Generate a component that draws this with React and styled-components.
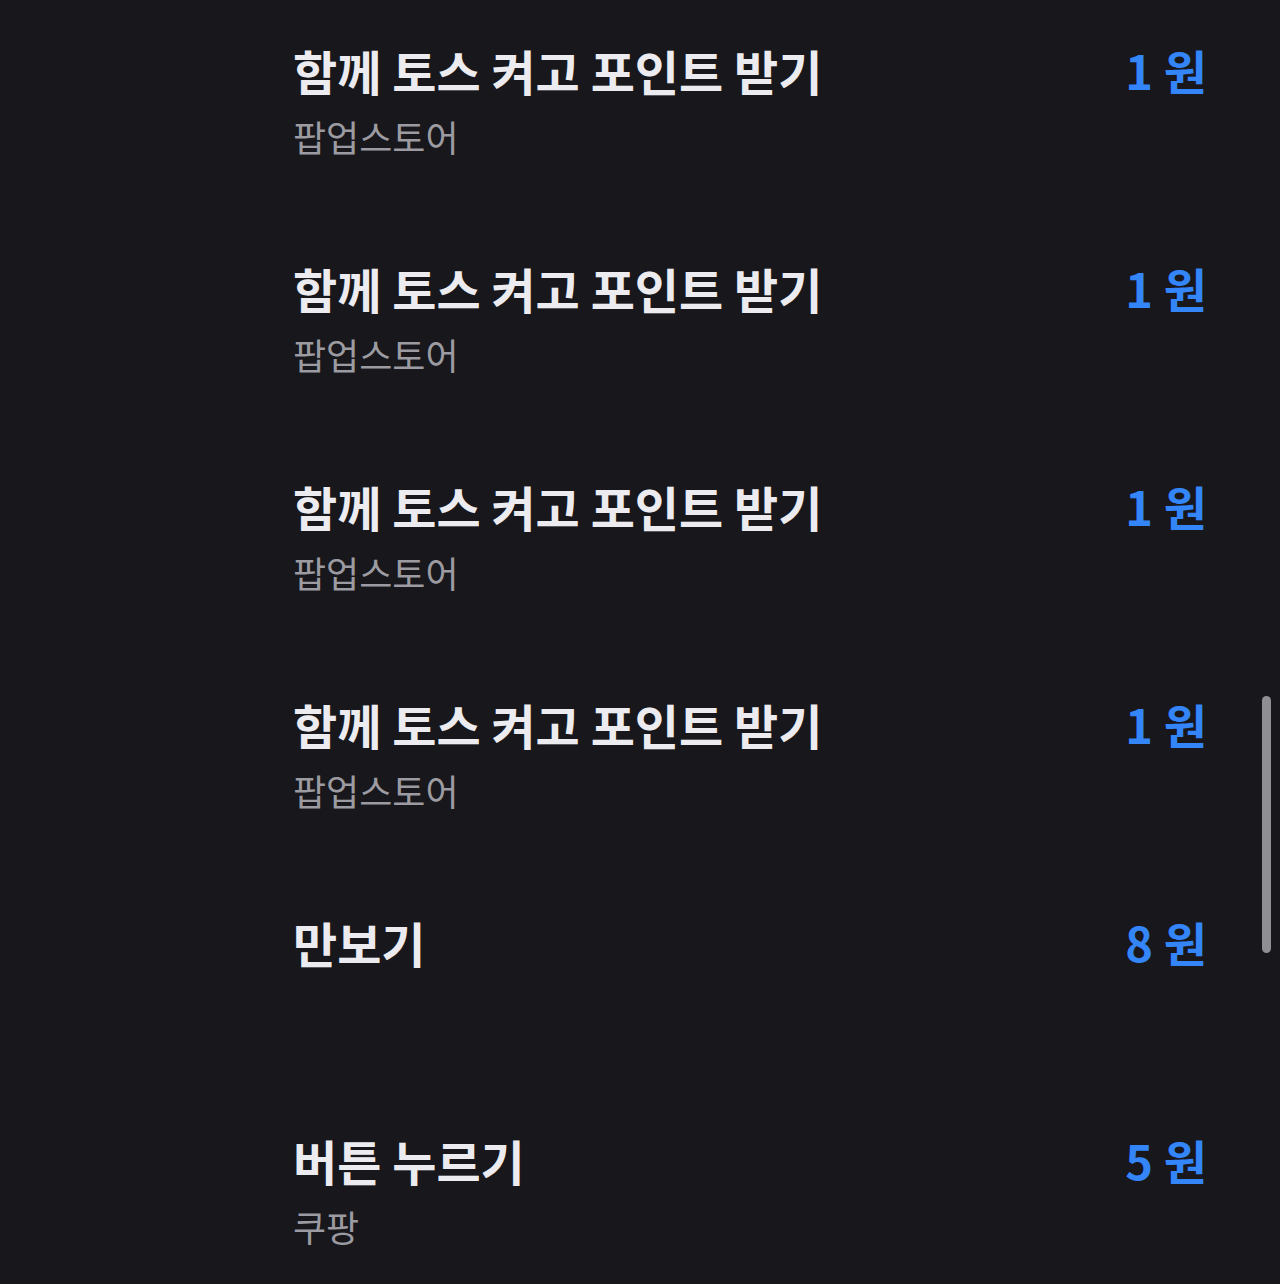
import React from 'react'
import styled, { createGlobalStyle } from 'styled-components'

const GlobalStyle = createGlobalStyle`
  html, body {
    margin: 0;
    padding: 0;
    background: #17171c;
  }
  body {
    font-family: "Noto Sans CJK KR", "Noto Sans", sans-serif;
    -webkit-font-smoothing: antialiased;
  }
`

const missions = [
  { title: '함께 토스 켜고 포인트 받기', brand: '팝업스토어', reward: 1 },
  { title: '함께 토스 켜고 포인트 받기', brand: '팝업스토어', reward: 1 },
  { title: '함께 토스 켜고 포인트 받기', brand: '팝업스토어', reward: 1 },
  { title: '함께 토스 켜고 포인트 받기', brand: '팝업스토어', reward: 1 },
  { title: '만보기', reward: 8 },
  { title: '버튼 누르기', brand: '쿠팡', reward: 5 },
]

const Screen = styled.div`
  position: relative;
  width: 1280px;
  height: 1284px;
  overflow: hidden;
  background: #17171c;
`

const List = styled.ul`
  list-style: none;
  margin: 0;
  padding: 35px 73px 0 293px;
`

const Row = styled.li`
  display: flex;
  justify-content: space-between;
  align-items: flex-start;
  height: 218px;
`

const Texts = styled.div`
  display: flex;
  flex-direction: column;
  gap: 6px;
`

const Title = styled.span`
  color: #ececf0;
  font-size: 48px;
  font-weight: 600;
  line-height: 70px;
`

const Brand = styled.span`
  color: #9b9ba1;
  font-size: 36px;
  font-weight: 400;
  line-height: 50px;
`

const Reward = styled.span`
  color: #3485f7;
  font-size: 47px;
  font-weight: 700;
  line-height: 70px;
  white-space: nowrap;
`

const Scrollbar = styled.div`
  position: absolute;
  right: 9px;
  top: 696px;
  width: 9px;
  height: 257px;
  border-radius: 5px;
  background: #8e8e93;
`

export default function App() {
  return (
    <Screen>
      <GlobalStyle />
      <List>
        {missions.map((m, i) => (
          <Row key={i}>
            <Texts>
              <Title>{m.title}</Title>
              {m.brand && <Brand>{m.brand}</Brand>}
            </Texts>
            <Reward>{m.reward} 원</Reward>
          </Row>
        ))}
      </List>
      <Scrollbar />
    </Screen>
  )
}
